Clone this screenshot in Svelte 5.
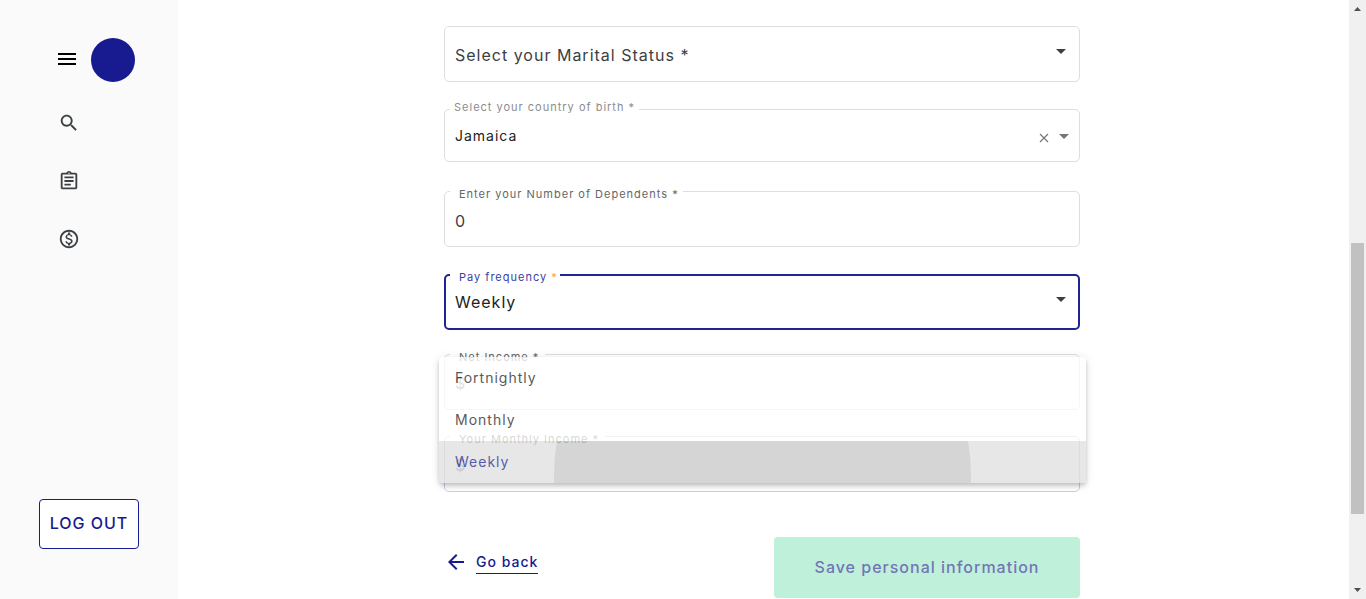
<script>
  let marital = $state('');
  let country = $state('Jamaica');
  let dependents = $state('0');
  let frequency = $state('Weekly');
  const frequencies = ['Fortnightly', 'Monthly', 'Weekly'];
</script>

<div class="page">
  <aside class="sidebar">
    <div class="brand">
      <button class="icon-button" aria-label="Menu">
        <svg width="24" height="24" viewBox="0 0 24 24" fill="#000"><path d="M3 18h18v-2H3v2zm0-5h18v-2H3v2zm0-7v2h18V6H3z" /></svg>
      </button>
      <span class="avatar"></span>
    </div>
    <nav>
      <a href="#search" aria-label="Search">
        <svg width="22" height="22" viewBox="0 0 24 24"><path d="M15.5 14h-.79l-.28-.27C15.41 12.59 16 11.11 16 9.5 16 5.91 13.09 3 9.5 3S3 5.91 3 9.5 5.91 16 9.5 16c1.61 0 3.09-.59 4.23-1.57l.27.28v.79l5 4.99L20.49 19l-4.99-5zm-6 0C7.01 14 5 11.99 5 9.5S7.01 5 9.5 5 14 7.01 14 9.5 11.99 14 9.5 14z" /></svg>
      </a>
      <a href="#applications" aria-label="Applications">
        <svg width="22" height="22" viewBox="0 0 24 24"><path d="M7 15h7v2H7zm0-4h10v2H7zm0-4h10v2H7zm12-4h-4.18C14.4 1.84 13.3 1 12 1c-1.3 0-2.4.84-2.82 2H5c-.14 0-.27.01-.4.04-.39.08-.74.28-1.01.55-.18.18-.33.4-.43.64-.1.23-.16.49-.16.77v14c0 .27.06.54.16.78s.25.45.43.64c.27.27.62.47 1.01.55.13.02.26.03.4.03h14c1.1 0 2-.9 2-2V5c0-1.1-.9-2-2-2zm-7-.25c.41 0 .75.34.75.75s-.34.75-.75.75-.75-.34-.75-.75.34-.75.75-.75zM19 19H5V5h14v14z" /></svg>
      </a>
      <a href="#payments" aria-label="Payments">
        <svg width="22" height="22" viewBox="0 0 24 24"><path d="M12 2C6.48 2 2 6.48 2 12s4.48 10 10 10 10-4.48 10-10S17.520 2 12 2zm0 18c-4.410 0-8-3.590-8-8s3.590-8 8-8 8 3.590 8 8-3.590 8-8 8zm.31-8.860c-1.770-.45-2.340-.94-2.340-1.670 0-.84.790-1.430 2.100-1.430 1.380 0 1.900.66 1.940 1.640h1.710c-.05-1.340-.87-2.570-2.490-2.970V5H10.900v1.690c-1.510.32-2.720 1.300-2.720 2.810 0 1.790 1.490 2.690 3.660 3.210 1.950.46 2.340 1.150 2.340 1.870 0 .53-.39 1.390-2.100 1.390-1.600 0-2.230-.72-2.320-1.640H8.040c.1 1.700 1.360 2.660 2.860 2.970V19h2.340v-1.670c1.520-.29 2.720-1.160 2.730-2.770-.01-2.200-1.900-2.960-3.660-3.420z" /></svg>
      </a>
    </nav>
    <button class="logout">LOG OUT</button>
  </aside>

  <main>
    <form>
      <div class="field">
        <select aria-label="Select your Marital Status" bind:value={marital}>
          <option value="">Select your Marital Status *</option>
        </select>
        <i class="caret"></i>
      </div>

      <div class="field lookup">
        <label for="country">Select your country of birth *</label>
        <input id="country" bind:value={country} />
        <button type="button" class="clear" aria-label="Clear country" onclick={() => (country = '')}>
          <svg width="10" height="10" viewBox="0 0 10 10" stroke="#777" stroke-width="1.2"><path d="M1 1l8 8M9 1l-8 8" /></svg>
        </button>
        <i class="caret"></i>
      </div>

      <div class="field number">
        <label for="dependents">Enter your Number of Dependents *</label>
        <input id="dependents" inputmode="numeric" bind:value={dependents} />
      </div>

      <div class="field focused">
        <label for="frequency">Pay frequency <b>*</b></label>
        <select id="frequency" bind:value={frequency}>
          {#each frequencies as f}<option>{f}</option>{/each}
        </select>
        <i class="caret"></i>
        <div class="panel" role="listbox" aria-label="Pay frequency">
          {#each frequencies as f}
            <button type="button" role="option" class:active={f === frequency} aria-selected={f === frequency} onclick={() => (frequency = f)}>
              {#if f === frequency}<span class="ripple"></span>{/if}
              <span class="option-text">{f}</span>
            </button>
          {/each}
        </div>
      </div>

      <div class="field money">
        <label for="net">Net Income *</label>
        <span class="prefix">$</span>
        <input id="net" />
      </div>

      <div class="field money monthly">
        <label for="monthly">Your Monthly Income *</label>
        <span class="prefix">$</span>
        <input id="monthly" />
      </div>

      <div class="actions">
        <a class="back" href="#back">
          <svg width="24" height="24" viewBox="0 0 24 24" fill="#171b8f"><path d="M20 11H7.830l5.590-5.590L12 4l-8 8 8 8 1.410-1.410L7.830 13H20v-2z" /></svg>
          <span>Go back</span>
        </a>
        <button type="submit" class="save" disabled>Save personal information</button>
      </div>
    </form>
  </main>

  <div class="scrollbar" aria-hidden="true">
    <svg width="17" height="17" viewBox="0 0 17 17"><path d="M5 11h7L8.500 7z" fill="#505050" /></svg>
    <div class="track"><div class="thumb"></div></div>
    <svg width="17" height="17" viewBox="0 0 17 17"><path d="M5 6h7L8.500 10z" fill="#505050" /></svg>
  </div>
</div>

<style>
  :global(body) {
    margin: 0;
    background: #fff;
    font-family: Inter, 'Liberation Sans', sans-serif;
  }
  .page,
  .page * {
    box-sizing: border-box;
  }
  .page {
    display: flex;
    min-height: 100vh;
  }
  button,
  input,
  select {
    font: inherit;
    letter-spacing: inherit;
    color: inherit;
    border: 0;
    background: none;
    padding: 0;
    margin: 0;
    outline: 0;
  }
  svg {
    display: block;
  }
  .sidebar {
    width: 178px;
    flex: none;
    background: #fafafa;
    display: flex;
    flex-direction: column;
    padding: 38px 39px 50px;
  }
  .brand {
    display: flex;
    align-items: center;
    gap: 12px;
    padding-left: 16px;
  }
  .icon-button {
    padding-bottom: 2px;
  }
  .avatar {
    width: 44px;
    height: 44px;
    flex: none;
    border-radius: 50%;
    background: #171b8f;
  }
  nav {
    display: flex;
    flex-direction: column;
    gap: 36px;
    padding: 30px 0 0 19px;
    fill: #3c4043;
  }
  nav a {
    width: 22px;
  }
  .logout {
    margin-top: auto;
    height: 50px;
    padding-bottom: 2px;
    border: 1px solid #171b8f;
    border-radius: 4px;
    background: #fff;
    color: #171b8f;
    font-size: 16px;
    font-weight: 500;
    letter-spacing: 1px;
    white-space: nowrap;
  }
  main {
    flex: 1;
    padding: 26px 16px 1px 13px;
  }
  form {
    max-width: 636px;
    margin: 0 auto;
    display: flex;
    flex-direction: column;
    gap: 24px;
    letter-spacing: 1px;
  }
  .field {
    position: relative;
    display: flex;
    align-items: center;
    height: 56px;
    padding: 0 13px 0 10px;
    border: 1px solid #dedede;
    border-radius: 5px;
    font-size: 16px;
    color: #3c4043;
  }
  .field input,
  .field select {
    flex: 1;
    min-width: 0;
    height: 100%;
    appearance: none;
  }
  .field select {
    padding-top: 2px;
  }
  .field label {
    position: absolute;
    top: -6px;
    left: 5px;
    padding: 0 4px 0 9px;
    line-height: 16px;
    background: #fff;
    font-size: 11px;
    color: #666;
  }
  .caret {
    width: 10px;
    height: 5px;
    margin-bottom: 5px;
    background: #3c4043;
    clip-path: polygon(0 0, 100% 0, 50% 100%);
  }
  .field.lookup {
    height: 53px;
    margin-top: 3px;
    padding-right: 10px;
    font-size: 14px;
    color: #222;
  }
  .field.lookup label {
    top: -11px;
    padding: 0 4px;
    color: #8c8c8c;
  }
  .lookup .caret {
    margin: 2px 0 0 10px;
    background: #757575;
  }
  .clear {
    padding-top: 4px;
  }
  .field.number {
    margin-top: 5px;
  }
  .number input {
    padding-top: 4px;
  }
  .field.focused {
    margin-top: 3px;
    border: 2px solid #20248f;
    padding: 0 12px 0 9px;
    color: #222;
  }
  .field.focused label {
    left: 4px;
    top: -7px;
    padding-right: 2px;
    color: #3a3da5;
  }
  .field.focused select {
    padding-top: 0;
  }
  .focused b {
    color: #f9a825;
    font-weight: 400;
  }
  .money {
    color: #8a8d90;
  }
  .field.money label {
    padding-right: 6px;
  }
  .field.monthly {
    margin-top: 2px;
    border-color: #cdcde0;
  }
  .money .prefix {
    padding-top: 2px;
  }
  .panel {
    position: absolute;
    z-index: 1;
    top: 81px;
    left: -7px;
    right: -8px;
    display: flex;
    flex-direction: column;
    overflow: hidden;
    border-radius: 4px;
    background: #fff;
    opacity: 0.75;
    font-size: 14px;
    box-shadow:
      0 2px 4px -1px rgba(0, 0, 0, 0.2),
      0 4px 5px rgba(0, 0, 0, 0.14),
      0 1px 10px rgba(0, 0, 0, 0.12);
  }
  .panel button {
    position: relative;
    height: 42px;
    padding: 0 16px 2px;
    overflow: hidden;
    text-align: left;
  }
  .panel .active {
    background: #e0e0e0;
    color: #20248f;
  }
  .ripple {
    position: absolute;
    left: calc(50% - 209px);
    top: -174px;
    width: 417px;
    height: 417px;
    border-radius: 50%;
    background: rgba(0, 0, 0, 0.11);
  }
  .option-text {
    position: relative;
  }
  .actions {
    display: flex;
    justify-content: space-between;
    align-items: flex-start;
    padding-top: 21px;
  }
  .back {
    display: flex;
    align-items: center;
    gap: 8px;
    padding-top: 13px;
    color: #171b8f;
    font-size: 14px;
    font-weight: 500;
    text-decoration: none;
  }
  .back span {
    line-height: 22px;
    border-bottom: 1px solid #171b8f;
  }
  .save {
    width: 306px;
    height: 61px;
    padding-bottom: 2px;
    border-radius: 4px;
    background: #bff0d9;
    color: #7375b8;
    font-size: 16px;
    font-weight: 500;
  }
  .scrollbar {
    width: 17px;
    flex: none;
    display: flex;
    flex-direction: column;
    background: #f0f0f0;
  }
  .track {
    flex: 1;
    padding: 0 2px;
  }
  .thumb {
    position: relative;
    top: 40%;
    height: 48%;
    background: #c1c1c1;
  }
</style>
